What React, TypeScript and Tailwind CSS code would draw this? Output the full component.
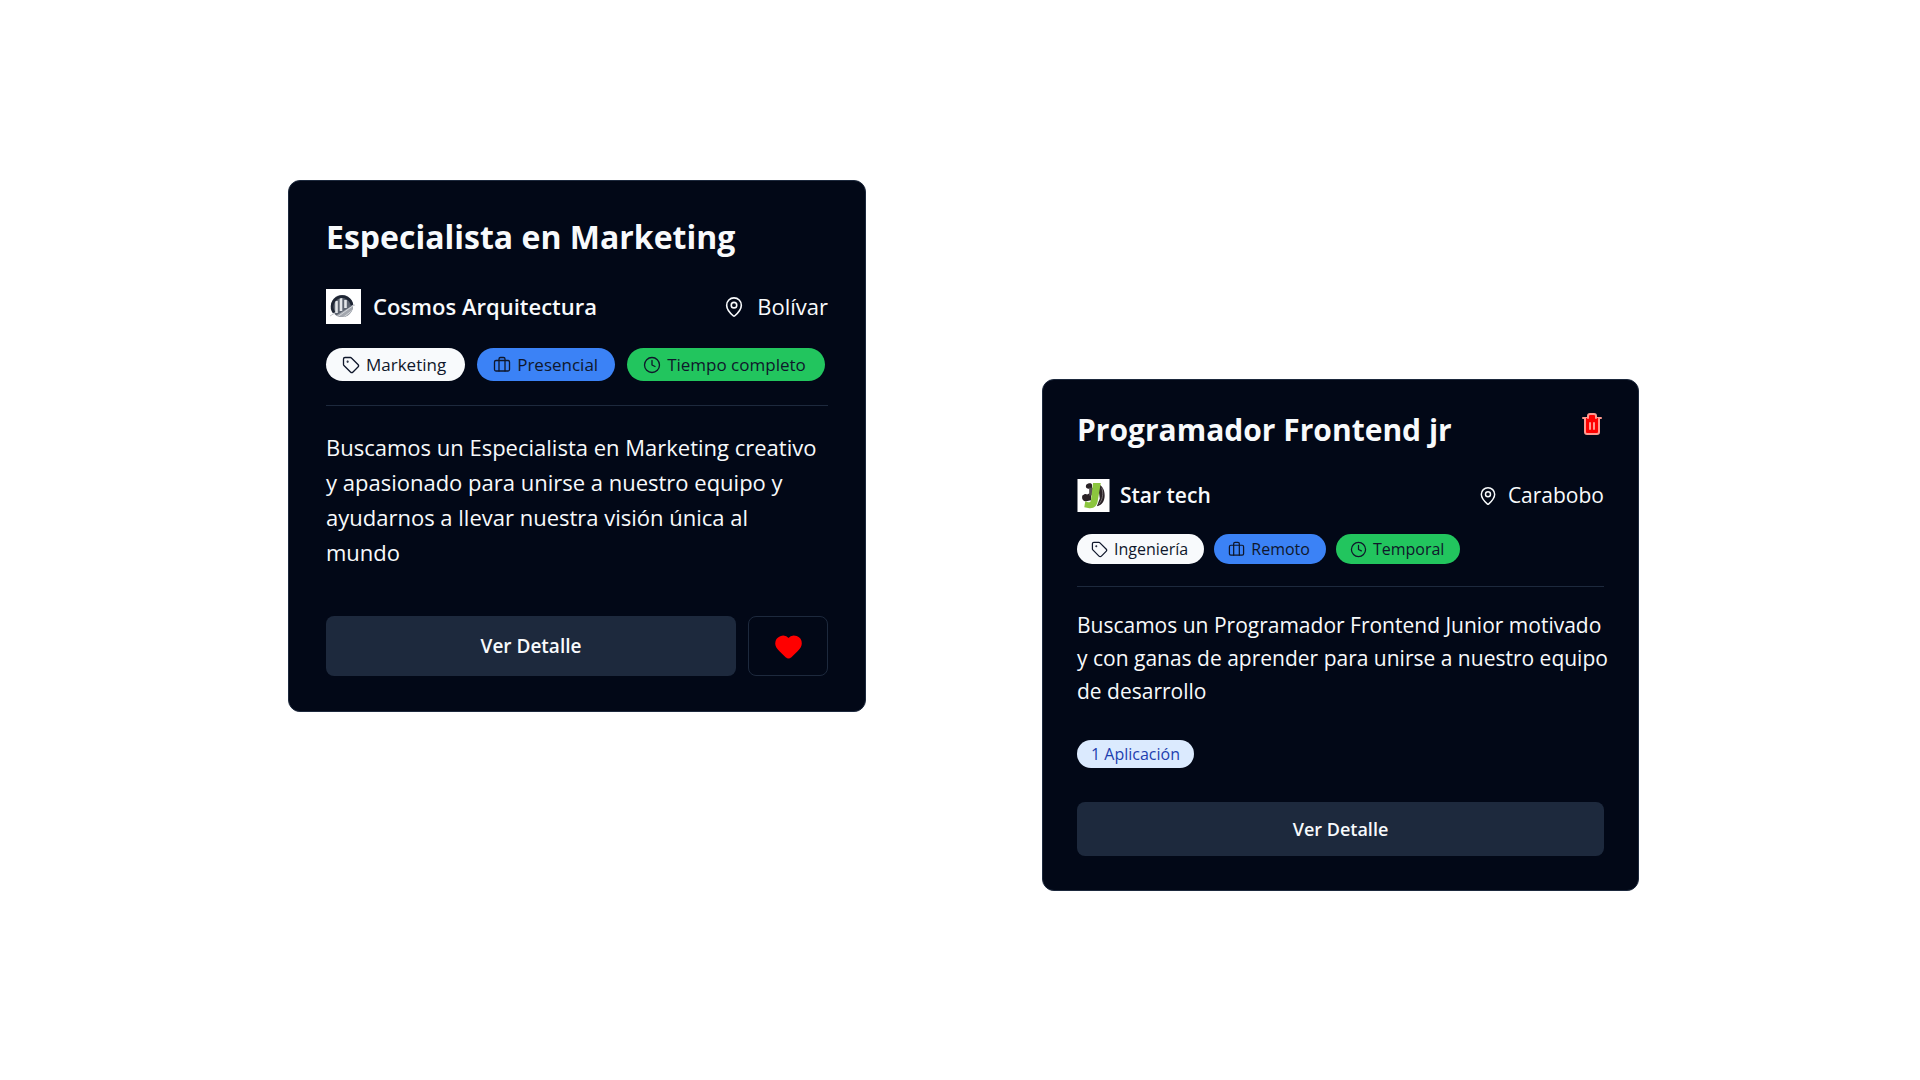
import React from "react";
import { Clock, Heart, MapPin, Tag } from "lucide-react";

function LuggageIcon({ className }: { className: string }) {
  return (
    <svg
      viewBox="0 0 24 24"
      fill="none"
      stroke="currentColor"
      strokeWidth="1.75"
      strokeLinecap="round"
      strokeLinejoin="round"
      className={className}
      aria-hidden="true"
    >
      <rect x="2" y="6" width="20" height="14" rx="2" />
      <path d="M16 20V4a2 2 0 0 0-2-2h-4a2 2 0 0 0-2 2v16" />
    </svg>
  );
}

function TrashIcon({ className }: { className: string }) {
  return (
    <svg
      viewBox="0 0 24 24"
      fill="#ff0000"
      stroke="currentColor"
      strokeWidth="2"
      strokeLinecap="round"
      strokeLinejoin="round"
      className={className}
      aria-hidden="true"
    >
      <path d="M3 6h18" />
      <path d="M19 6v14c0 1-1 2-2 2H7c-1 0-2-1-2-2V6" />
      <path d="M8 6V4c0-1 1-2 2-2h4c1 0 2 1 2 2v2" />
      <path d="M10 11v6M14 11v6" />
    </svg>
  );
}

function CosmosLogo() {
  return (
    <svg viewBox="0 0 35 35" className="size-[35px] shrink-0" role="img" aria-label="Cosmos Arquitectura">
      <defs>
        <clipPath id="cosmos-disc">
          <circle cx="16" cy="17" r="11" />
        </clipPath>
      </defs>
      <rect width="35" height="35" fill="#fff" />
      <g clipPath="url(#cosmos-disc)">
        <rect width="35" height="35" fill="#5d6470" />
        <path d="M10.500 12v12M15 9v13M19.500 11v8" stroke="#e4e6e9" strokeWidth="2.600" />
        <path d="M6 29 29 15v15H6z" fill="#a3a7ae" />
        <path d="m10 29 18-13M15 30l12-9" stroke="#d3d6da" strokeWidth="1" />
      </g>
      <path d="m4 27 5-3M26 17l3-1" stroke="#c6c9ce" strokeWidth="1" />
      <path d="M8 23.500A10 10 0 1 1 26 16" fill="none" stroke="#1e2533" strokeWidth="2.800" />
    </svg>
  );
}

function StarTechLogo() {
  return (
    <svg viewBox="0 0 33 34" className="size-[33px] shrink-0" role="img" aria-label="Star tech">
      <rect width="33" height="34" fill="#fff" />
      <path d="M9 6c3-2 5-2 6 0v4h-4c-2 0-3-2-2-4zM5 17c2-2 4-2 5-1l4-2v8l-5 1c-3 0-5-2-4-6z" fill="#2a2226" />
      <path d="M12 9h4v8h-4z" fill="#5a5356" />
      <path d="M21 5c5 2 7 7 7 12 0 6-3 10-8 11l3-8z" fill="#2a2226" />
      <path d="M25 9c2 6 1 12-3 17" fill="none" stroke="#8b8588" strokeWidth="0.800" />
      <path d="M16 4h8l-3 18c-1 6-4 9-10 8l-4-1 1-6 3 1c2 0 3-1 3-3z" fill="#8cc63f" />
    </svg>
  );
}

const badge = "flex items-center rounded-full text-slate-900";

export default function App() {
  return (
    <main className="grid min-h-screen grid-cols-[578fr_597fr] items-start gap-44 bg-white pt-[180px] pr-[281px] pl-72 font-['Open_Sans','Noto_Sans',sans-serif] text-slate-50">
      <article className="rounded-xl border border-slate-800 bg-[#020817] px-[37px] pt-8 pb-[35px]">
        <h2 className="text-[32px] leading-[48px] font-bold">Especialista en Marketing</h2>
        <div className="mt-7 flex items-center justify-between">
          <div className="flex items-center gap-3">
            <CosmosLogo />
            <h3 className="text-[22px] leading-[35px] font-semibold">Cosmos Arquitectura</h3>
          </div>
          <p className="flex items-center gap-3 text-[22px] leading-[35px]">
            <MapPin className="size-[22px]" strokeWidth={1.75} aria-hidden="true" />
            Bolívar
          </p>
        </div>
        <div className="mt-6 flex gap-3 text-[17px] leading-[33px] font-medium whitespace-nowrap">
          <span className={`${badge} gap-1.5 bg-slate-50 pr-[19px] pl-4`}>
            <Tag className="size-[18px]" strokeWidth={1.75} aria-hidden="true" />
            Marketing
          </span>
          <span className={`${badge} gap-1.5 bg-[#3b82f6] pr-[17px] pl-4`}>
            <LuggageIcon className="size-[18px]" />
            Presencial
          </span>
          <span className={`${badge} gap-1.5 bg-[#22c55e] pr-[19px] pl-4`}>
            <Clock className="size-[18px]" strokeWidth={1.75} aria-hidden="true" />
            Tiempo completo
          </span>
        </div>
        <hr className="mt-6 border-slate-800" />
        <p className="mt-6 pr-1 text-[22px] leading-[35px]">
          Buscamos un Especialista en Marketing creativo y apasionado para unirse a nuestro equipo y
          ayudarnos a llevar nuestra visión única al mundo
        </p>
        <div className="mt-[46px] flex gap-3">
          <button type="button" className="h-[60px] flex-1 rounded-lg bg-slate-800 text-[19px] font-semibold">
            Ver Detalle
          </button>
          <button
            type="button"
            aria-label="Quitar de favoritos"
            className="flex h-[60px] w-20 items-center justify-center rounded-lg border border-slate-800"
          >
            <Heart className="size-[29px] fill-[#ff0000] text-[#ff0000]" aria-hidden="true" />
          </button>
        </div>
      </article>

      <article className="mt-[199px] rounded-xl border border-slate-800 bg-[#020817] px-[34px] pt-7 pb-[34px]">
        <div className="flex items-start justify-between">
          <h2 className="text-[30px] leading-[44px] font-bold">Programador Frontend jr</h2>
          <button type="button" aria-label="Eliminar oferta" className="mt-1">
            <TrashIcon className="size-6 text-[#ff9a90]" />
          </button>
        </div>
        <div className="mt-[27px] flex items-center justify-between">
          <div className="flex items-center gap-2.5">
            <StarTechLogo />
            <h3 className="text-[21px] leading-[33px] font-semibold">Star tech</h3>
          </div>
          <p className="flex items-center gap-2.5 text-[21px] leading-[33px]">
            <MapPin className="size-5" strokeWidth={1.75} aria-hidden="true" />
            Carabobo
          </p>
        </div>
        <div className="mt-[22px] flex gap-2.5 text-base leading-[30px] font-medium whitespace-nowrap">
          <span className={`${badge} gap-1.5 bg-slate-50 pr-4 pl-3.5`}>
            <Tag className="size-[17px]" strokeWidth={1.75} aria-hidden="true" />
            Ingeniería
          </span>
          <span className={`${badge} gap-1.5 bg-[#3b82f6] pr-4 pl-3.5`}>
            <LuggageIcon className="size-[17px]" />
            Remoto
          </span>
          <span className={`${badge} gap-1.5 bg-[#22c55e] pr-4 pl-3.5`}>
            <Clock className="size-[17px]" strokeWidth={1.75} aria-hidden="true" />
            Temporal
          </span>
        </div>
        <hr className="mt-[22px] border-slate-800" />
        <p className="-mr-2 mt-[22px] text-[21px] leading-[33px]">
          Buscamos un Programador Frontend Junior motivado y con ganas de aprender para unirse a
          nuestro equipo de desarrollo
        </p>
        <span className="mt-8 flex w-fit rounded-full bg-blue-100 px-3.5 text-base leading-7 font-medium text-[#1e40af]">
          1 Aplicación
        </span>
        <button type="button" className="mt-[34px] h-[54px] w-full rounded-lg bg-slate-800 text-lg font-semibold">
          Ver Detalle
        </button>
      </article>
    </main>
  );
}
